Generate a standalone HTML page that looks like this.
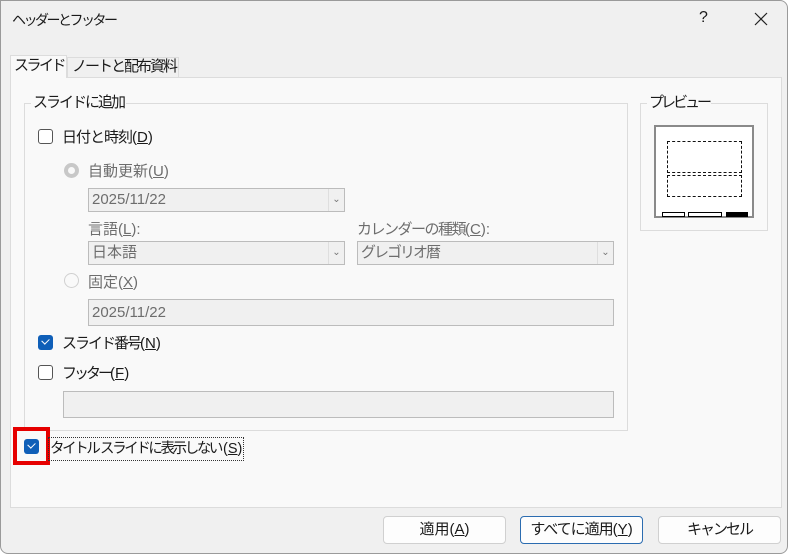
<!DOCTYPE html><html><head><meta charset="utf-8"><style>
*{box-sizing:border-box;margin:0;padding:0}
body{width:792px;height:556px;background:#fff;font-family:"Liberation Sans","Noto Sans CJK JP",sans-serif;font-size:15px;color:#1a1a1a;position:relative;overflow:hidden}
.win{position:absolute;left:0;top:0;width:788px;height:554px;background:#f0f0f0;border:1px solid #9a9a9a;border-radius:0 8px 8px 8px}
.a{position:absolute;white-space:nowrap}
.panel{position:absolute;left:10px;top:77px;width:772px;height:431px;background:#f9f9f9;border:1px solid #dcdcdc}
.grp{position:absolute;border:1px solid #dcdcdc}
.leg{position:absolute;background:#f9f9f9;padding:0 2px;line-height:18px}
.cb{position:absolute;width:15px;height:15px;border:1px solid #555;border-radius:3px;background:#fff}
.cbc{position:absolute;width:15px;height:15px;border-radius:3px;background:#0f5fb8}
.cbc:after{content:"";position:absolute;left:4px;top:3px;width:6px;height:4px;border-left:1.5px solid #fff;border-bottom:1.5px solid #fff;transform:rotate(-45deg)}
.combo{position:absolute;height:24px;background:#f0f0f0;border:1px solid #bcbcbc;color:#6d6d6d;padding-left:3px;line-height:22px}
.combo i{position:absolute;right:0;top:0;width:16px;height:22px;border-left:1px solid #dedede;font-style:normal;font-size:10px;text-align:center;color:#777}
.tb{position:absolute;height:27px;background:#f0f0f0;border:1px solid #bcbcbc;color:#6d6d6d;padding-left:3px;line-height:25px}
.gr{color:#6d6d6d}
.k{letter-spacing:-2px}
.k2{letter-spacing:-1px}
.btn{position:absolute;top:516px;width:123px;height:28px;background:#fdfdfd;border:1px solid #d0d0d0;border-radius:4px;text-align:center;line-height:26px}
u{text-decoration:underline}
</style></head><body>
<div class="win"></div>
<div class="a" style="left:12px;top:10px;font-size:14px;letter-spacing:-2.5px">ヘッダーとフッター</div>
<div class="a" style="left:699px;top:9px;font-size:16px">?</div>
<svg class="a" style="left:754px;top:12px" width="14" height="14"><path d="M1 1L13 13M13 1L1 13" stroke="#222" stroke-width="1.2"/></svg>
<div class="panel"></div>
<div class="a" style="left:10px;top:55px;width:57px;height:23px;background:#f9f9f9;border:1px solid #dcdcdc;border-bottom:none"></div>
<div class="a" style="left:14px;top:56px;line-height:20px;letter-spacing:-2.5px">スライド</div>
<div class="a" style="left:67px;top:57px;width:112px;height:20px;border:1px solid #dcdcdc;border-bottom:none"></div>
<div class="a" style="left:72px;top:57px;line-height:20px;letter-spacing:-2px">ノートと配布資料</div>

<div class="grp" style="left:24px;top:103px;width:604px;height:328px"></div>
<div class="leg" style="left:31px;top:94px;letter-spacing:-2px">スライドに追加</div>
<div class="grp" style="left:640px;top:103px;width:128px;height:128px"></div>
<div class="leg" style="left:647px;top:94px;letter-spacing:-3px">プレビュー</div>
<div class="a" style="left:654px;top:125px;width:100px;height:93px;background:#fff;border:2px solid #8a8a8a"></div>
<div class="a" style="left:667px;top:141px;width:75px;height:32px;border:1px dashed #111"></div>
<div class="a" style="left:667px;top:175px;width:75px;height:22px;border:1px dashed #111"></div>
<div class="a" style="left:662px;top:212px;width:23px;height:5px;border:1px solid #000"></div>
<div class="a" style="left:688px;top:212px;width:34px;height:5px;border:1px solid #000"></div>
<div class="a" style="left:726px;top:212px;width:22px;height:5px;background:#000"></div>

<div class="cb" style="left:38px;top:129px"></div>
<div class="a" style="left:62px;top:126px"><span class="k2">日付と時刻</span>(<u>D</u>)</div>
<div class="a" style="left:64px;top:163px;width:15px;height:15px;border-radius:50%;background:#c8c8c8"><div style="position:absolute;left:4px;top:4px;width:7px;height:7px;border-radius:50%;background:#f9f9f9"></div></div>
<div class="a gr" style="left:88px;top:160px">自動更新(<u>U</u>)</div>
<div class="combo" style="left:88px;top:188px;width:257px">2025/11/22<i>⌄</i></div>
<div class="a gr" style="left:88px;top:218px">言語(<u>L</u>):</div>
<div class="a gr" style="left:357px;top:218px"><span style="letter-spacing:-1.5px">カレンダーの種類</span>(<u>C</u>):</div>
<div class="combo" style="left:88px;top:241px;width:257px">日本語<i>⌄</i></div>
<div class="combo" style="left:357px;top:241px;width:257px"><span class="k">グレゴリオ暦</span><i>⌄</i></div>
<div class="a" style="left:64px;top:273px;width:15px;height:15px;border-radius:50%;border:1px solid #d0d0d0;background:#f9f9f9"></div>
<div class="a gr" style="left:88px;top:271px">固定(<u>X</u>)</div>
<div class="tb" style="left:88px;top:299px;width:526px">2025/11/22</div>
<div class="cbc" style="left:38px;top:335px"></div>
<div class="a" style="left:62px;top:332px"><span class="k">スライド番号</span>(<u>N</u>)</div>
<div class="cb" style="left:38px;top:365px"></div>
<div class="a" style="left:62px;top:362px"><span style="letter-spacing:-3px">フッター</span>(<u>F</u>)</div>
<div class="tb" style="left:63px;top:391px;width:551px"></div>

<div class="a" style="left:13px;top:427px;width:37px;height:38px;border:4px solid #e60000"></div>
<div class="cbc" style="left:24px;top:439px"></div>
<div class="a" style="left:48px;top:437px;width:196px;height:24px;border:1px dotted #333;padding-left:1px;line-height:22px;font-size:14.5px"><span style="letter-spacing:-2.4px;margin-right:2px">タイトル スライドに表示しない</span>(<u>S</u>)</div>

<div class="btn" style="left:383px">適用(<u>A</u>)</div>
<div class="btn" style="left:520px;border-color:#2b6cb0"><span class="k2">すべてに適用</span>(<u>Y</u>)</div>
<div class="btn" style="left:658px;letter-spacing:-2px">キャンセル</div>
</body></html>
